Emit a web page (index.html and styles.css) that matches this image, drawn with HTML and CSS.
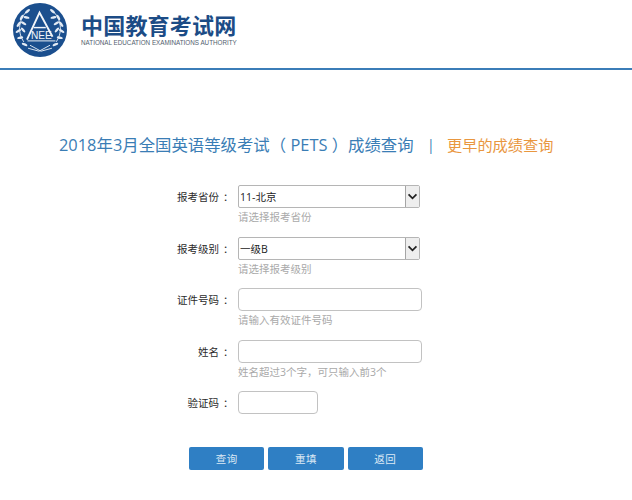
FILE: index.html
```html
<!DOCTYPE html>
<html lang="zh-CN">
<head>
<meta charset="utf-8">
<title>成绩查询</title>
<link rel="stylesheet" href="styles.css">
</head>
<body>
<header class="site-header">
  <svg class="logo" viewBox="0 0 56 56" width="54" height="54" aria-hidden="true">
    <circle cx="28" cy="28" r="28" fill="#1b4f8e"/>
    <g fill="none" stroke="#dfe8f2" stroke-width="1" stroke-linecap="round">
      <path d="M11 40C4 30 6 16 15 8"/>
      <path d="M45 40C52 30 50 16 41 8"/>
      <path d="M16 47L27 50L38 44"/>
      <path d="M40 47L29 50L18 44"/>
    </g>
    <g fill="#e4ebf4">
      <ellipse cx="5.500" cy="29" rx="3.200" ry="1.300" transform="rotate(-30 5.500 29)"/>
      <ellipse cx="10.500" cy="28" rx="3.200" ry="1.300" transform="rotate(-130 10.500 28)"/>
      <ellipse cx="6" cy="22" rx="3.200" ry="1.300" transform="rotate(-55 6 22)"/>
      <ellipse cx="11" cy="21" rx="3.200" ry="1.300" transform="rotate(-150 11 21)"/>
      <ellipse cx="9" cy="15" rx="3.200" ry="1.300" transform="rotate(-60 9 15)"/>
      <ellipse cx="14" cy="15" rx="3.200" ry="1.300" transform="rotate(-170 14 15)"/>
      <ellipse cx="15" cy="8.500" rx="3.200" ry="1.300" transform="rotate(-40 15 8.500)"/>
      <ellipse cx="7.500" cy="36" rx="3.200" ry="1.300" transform="rotate(-10 7.500 36)"/>
      <ellipse cx="12" cy="43" rx="3.200" ry="1.300" transform="rotate(25 12 43)"/>
      <ellipse cx="50.500" cy="29" rx="3.200" ry="1.300" transform="rotate(30 50.500 29)"/>
      <ellipse cx="45.500" cy="28" rx="3.200" ry="1.300" transform="rotate(130 45.500 28)"/>
      <ellipse cx="50" cy="22" rx="3.200" ry="1.300" transform="rotate(55 50 22)"/>
      <ellipse cx="45" cy="21" rx="3.200" ry="1.300" transform="rotate(150 45 21)"/>
      <ellipse cx="47" cy="15" rx="3.200" ry="1.300" transform="rotate(60 47 15)"/>
      <ellipse cx="42" cy="15" rx="3.200" ry="1.300" transform="rotate(170 42 15)"/>
      <ellipse cx="41" cy="8.500" rx="3.200" ry="1.300" transform="rotate(40 41 8.500)"/>
      <ellipse cx="48.500" cy="36" rx="3.200" ry="1.300" transform="rotate(10 48.500 36)"/>
      <ellipse cx="44" cy="43" rx="3.200" ry="1.300" transform="rotate(-25 44 43)"/>
    </g>
    <path d="M14.500 38L27.500 10L41 35" fill="none" stroke="#f2f5f9" stroke-width="2"/>
    <path d="M21.500 25.500H34" stroke="#f2f5f9" stroke-width="1.500"/>
    <text x="29.500" y="37" class="logo-nee">NEE</text>
    <path d="M15 39.300H44" stroke="#f2f5f9" stroke-width="1"/>
  </svg>
  <div class="brand">
    <div class="brand-cn">中国教育考试网</div>
    <div class="brand-en">NATIONAL EDUCATION EXAMINATIONS AUTHORITY</div>
  </div>
</header>

<main class="content">
  <h1 class="title">
    <span class="title-main">2018年3月全国英语等级考试（ PETS ）成绩查询</span>
    <span class="title-sep">|</span>
    <a class="title-link">更早的成绩查询</a>
  </h1>

  <form class="form">
    <label class="label">报考省份<span class="colon">：</span></label>
    <div class="field">
      <div class="select"><span class="select-value">11-北京</span><span class="select-arrow"><svg viewBox="0 0 12 8" width="11" height="7"><path d="M1.500 1.500L6 6L10.500 1.500" fill="none" stroke="#222" stroke-width="2"/></svg></span></div>
      <div class="hint">请选择报考省份</div>
    </div>
    <label class="label">报考级别<span class="colon">：</span></label>
    <div class="field">
      <div class="select"><span class="select-value">一级B</span><span class="select-arrow"><svg viewBox="0 0 12 8" width="11" height="7"><path d="M1.500 1.500L6 6L10.500 1.500" fill="none" stroke="#222" stroke-width="2"/></svg></span></div>
      <div class="hint">请选择报考级别</div>
    </div>
    <label class="label">证件号码<span class="colon">：</span></label>
    <div class="field">
      <input class="input" type="text">
      <div class="hint">请输入有效证件号码</div>
    </div>
    <label class="label">姓名<span class="colon">：</span></label>
    <div class="field">
      <input class="input" type="text">
      <div class="hint">姓名超过3个字，可只输入前3个</div>
    </div>
    <label class="label">验证码<span class="colon">：</span></label>
    <div class="field">
      <input class="input input-short" type="text">
    </div>
  </form>

  <div class="actions">
    <button class="btn" type="button">查询</button>
    <button class="btn" type="button">重填</button>
    <button class="btn" type="button">返回</button>
  </div>
</main>
</body>
</html>
```

FILE: styles.css
```css
* { box-sizing: border-box; }
html, body { margin: 0; padding: 0; }
body {
  width: 632px;
  height: 500px;
  overflow: hidden;
  background: #fff;
  font-family: "Open Sans", "Noto Sans CJK SC", sans-serif;
  color: #333;
}
.site-header {
  height: 70px;
  border-bottom: 2px solid #3b7db8;
  display: flex;
  align-items: flex-start;
  padding: 3px 0 0 13px;
}
.logo { flex: none; }
.logo-nee {
  font-family: "Liberation Sans", sans-serif;
  font-size: 10.500px;
  fill: #f2f5f9;
  text-anchor: middle;
}
.brand { margin-left: 14px; padding-top: 8px; }
.brand-cn {
  font-family: "Noto Sans CJK SC", sans-serif;
  font-size: 22px;
  line-height: 26px;
  font-weight: 700;
  color: #1c4c86;
  letter-spacing: 0.2px;
}
.brand-en {
  font-family: "Liberation Sans", sans-serif;
  font-size: 6.300px;
  line-height: 8px;
  margin-top: 2px;
  color: #52606e;
  white-space: nowrap;
  width: 156px;
}
.content { display: flex; flex-direction: column; }
.title {
  margin: 62px 0 0 59px;
  display: flex;
  align-items: center;
  height: 24px;
  font-weight: 400;
  white-space: nowrap;
}
.title-main { width: 353px; font-size: 16.400px; color: #3a7db5; }
.title-sep { width: 35px; padding-left: 15px; font-size: 14px; color: #3a7db5; }
.title-link { font-size: 15.200px; color: #e9973f; }
.form {
  margin: 29px 0 0 0;
  display: grid;
  grid-template-columns: 232px 184px;
  grid-auto-rows: 51.500px;
  column-gap: 6px;
}
.label {
  height: 23px;
  padding-top: 1px;
  line-height: 23px;
  font-size: 10.500px;
  text-align: right;
  color: #2b2b2b;
  white-space: nowrap;
}
.colon {
  display: inline-block;
  width: 13px;
  padding-left: 4px;
  text-align: left;
}
.field { display: flex; flex-direction: column; align-items: flex-start; }
.select {
  width: 182px;
  height: 23px;
  border: 1px solid #b5b5b5;
  border-radius: 2px;
  display: flex;
  align-items: center;
  justify-content: space-between;
  background: #fff;
}
.select-value { font-size: 10.500px; color: #222; padding-left: 1px; }
.select-arrow {
  width: 14px;
  height: 21px;
  background: #eee;
  border-left: 1px solid #a5a5a5;
  display: flex;
  align-items: center;
  justify-content: center;
}
.input {
  display: block;
  width: 184px;
  height: 23px;
  margin: 0;
  padding: 0;
  border: 1px solid #c2c2c2;
  border-radius: 4px;
  background: #fff;
}
.input-short { width: 80px; }
.hint {
  margin-top: 1px;
  font-size: 10.500px;
  line-height: 16px;
  color: #a9a9a9;
  white-space: nowrap;
}
.actions {
  margin: 4px 0 0 189px;
  display: flex;
  gap: 4px;
}
.btn {
  width: 75.300px;
  height: 23px;
  padding: 0;
  border: 0;
  border-radius: 2px;
  background: #2f7fc4;
  color: #dce9f5;
  font-family: "Noto Sans CJK SC", sans-serif;
  font-size: 10.500px;
  letter-spacing: 0.500px;
}
```
